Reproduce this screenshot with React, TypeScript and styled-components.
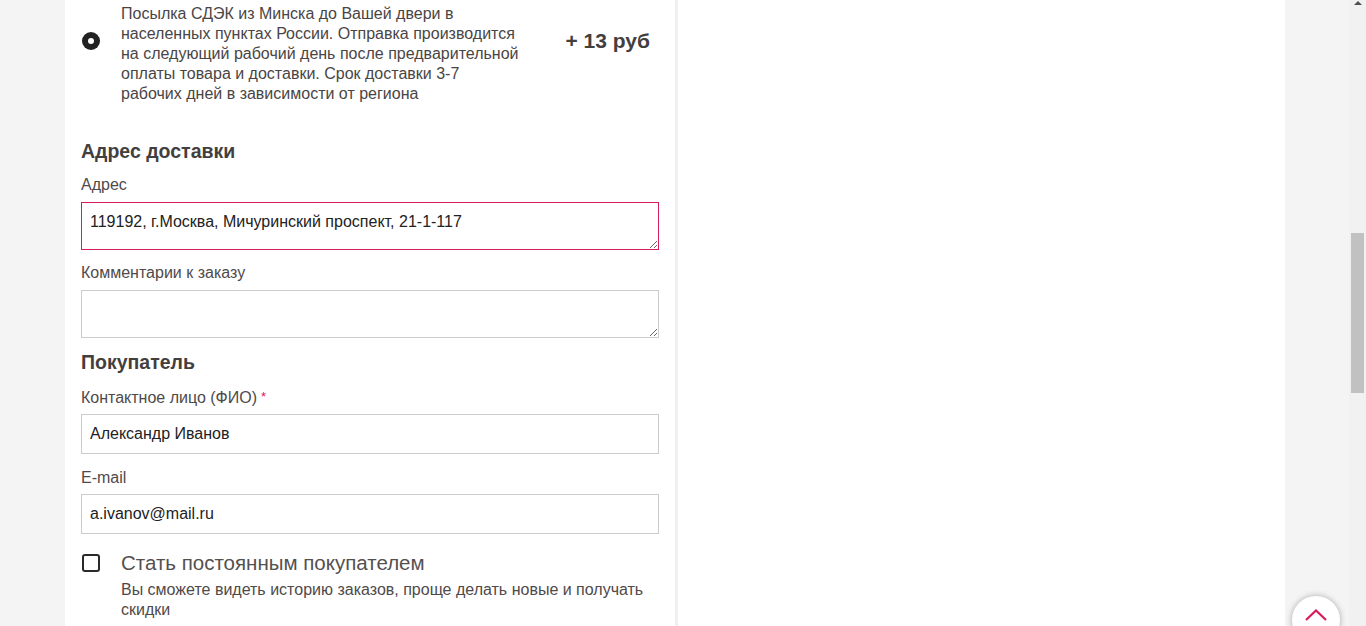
import React from 'react'
import styled, { createGlobalStyle } from 'styled-components'

const GlobalStyle = createGlobalStyle`
    html, body {
        margin: 0;
        padding: 0;
        overflow: hidden;
    }
    body {
        font-family: "Liberation Sans", Arial, sans-serif;
        color: #4a4545;
    }
`

const Page = styled.div`
    display: flex;
    height: 626px;
    width: 1366px;
    overflow: hidden;
`

const Canvas = styled.div`
    flex: 1;
    background-color: #f4f4f4;
    padding: 0 64px 0 65px;
`

const Sheet = styled.div`
    display: flex;
    height: 100%;
    background-color: #fff;
`

const LeftColumn = styled.div`
    width: 578px;
    padding: 4px 16px 0 16px;
    border-right: 3px solid #f0f0f0;
`

const RightColumn = styled.div`
    flex: 1;
`

const OptionRow = styled.div`
    display: flex;
    align-items: flex-start;
`

const Radio = styled.span`
    flex: none;
    width: 18px;
    height: 18px;
    margin: 28px 0 0 1px;
    border-radius: 50%;
    background-color: #222;
    display: flex;
    align-items: center;
    justify-content: center;

    &::after {
        content: '';
        width: 6px;
        height: 6px;
        border-radius: 50%;
        background-color: #fff;
    }
`

const OptionText = styled.p`
    margin: 0 0 0 21px;
    width: 398px;
    font-size: 16px;
    line-height: 20px;
`

const Price = styled.div`
    margin: 25px 9px 0 auto;
    font-size: 21px;
    font-weight: bold;
    color: #443f3f;
`

const Heading = styled.h3<{ $top: number }>`
    margin: ${(p) => p.$top}px 0 0;
    font-size: 19.5px;
    line-height: 22px;
    font-weight: bold;
    color: #443f3f;
`

const Label = styled.div<{ $top: number }>`
    margin-top: ${(p) => p.$top}px;
    font-size: 16px;
    line-height: 18px;
    color: #4f4a4a;
`

const Required = styled.span`
    color: #e0145b;
    margin-left: 4px;
    font-size: 13px;
    vertical-align: 2px;
`

const Area = styled.textarea<{ $focused?: boolean }>`
    display: block;
    box-sizing: border-box;
    width: 100%;
    height: 48px;
    margin-top: 8px;
    padding: 10px 8px;
    font-family: "Liberation Sans", Arial, sans-serif;
    font-size: 16px;
    line-height: 18px;
    color: #222;
    border: 1px solid ${(p) => (p.$focused ? '#d81b5a' : '#cccccc')};
    border-radius: 0;
    outline: none;
    resize: vertical;
`

const Field = styled.input`
    display: block;
    box-sizing: border-box;
    width: 100%;
    height: 40px;
    margin-top: 7px;
    padding: 0 8px;
    font-family: "Liberation Sans", Arial, sans-serif;
    font-size: 16px;
    color: #222;
    border: 1px solid #cccccc;
    border-radius: 0;
    outline: none;
`

const CheckRow = styled.div`
    display: flex;
    align-items: flex-start;
    margin-top: 17px;
`

const Check = styled.span`
    flex: none;
    box-sizing: border-box;
    width: 18px;
    height: 18px;
    margin: 3px 0 0 1px;
    border: 2px solid #2a2a2a;
    border-radius: 3px;
`

const CheckBody = styled.div`
    margin-left: 21px;
    padding-top: 1px;
    width: 540px;
`

const CheckTitle = styled.div`
    font-size: 20.5px;
    line-height: 22px;
    color: #555050;
`

const CheckNote = styled.div`
    margin-top: 6px;
    font-size: 16px;
    line-height: 20px;
    color: #4f4a4a;
`

const Scrollbar = styled.div`
    width: 17px;
    flex: none;
    background-color: #f1f1f1;
    display: flex;
    flex-direction: column;
    align-items: center;
`

const ScrollArrow = styled.span`
    margin-top: 1px;
    width: 0;
    height: 0;
    border-left: 4px solid transparent;
    border-right: 4px solid transparent;
    border-bottom: 4px solid #505050;
`

const ScrollThumb = styled.span`
    margin-top: 228px;
    width: 13px;
    height: 160px;
    background-color: #c1c1c1;
`

const ToTop = styled.button`
    position: fixed;
    left: 1292px;
    top: 596px;
    width: 48px;
    height: 48px;
    border-radius: 50%;
    border: none;
    background-color: #fff;
    box-shadow: 0 0 6px rgba(0, 0, 0, 0.3);
    display: flex;
    justify-content: center;
    padding-top: 13px;
`

export default function App() {
    return (
        <>
            <GlobalStyle />
            <Page>
                <Canvas>
                    <Sheet>
                        <LeftColumn>
                            <OptionRow>
                                <Radio />
                                <OptionText>
                                    Посылка СДЭК из Минска до Вашей двери в населенных пунктах России. Отправка
                                    производится на следующий рабочий день после предварительной оплаты товара и
                                    доставки. Срок доставки 3-7 рабочих дней в зависимости от региона
                                </OptionText>
                                <Price>+ 13 руб</Price>
                            </OptionRow>

                            <Heading $top={36}>Адрес доставки</Heading>
                            <Label $top={14}>Адрес</Label>
                            <Area $focused readOnly defaultValue="119192, г.Москва, Мичуринский проспект, 21-1-117" />
                            <Label $top={14}>Комментарии к заказу</Label>
                            <Area readOnly defaultValue="" />

                            <Heading $top={13}>Покупатель</Heading>
                            <Label $top={15}>
                                Контактное лицо (ФИО)<Required>*</Required>
                            </Label>
                            <Field readOnly defaultValue="Александр Иванов" />
                            <Label $top={15}>E-mail</Label>
                            <Field readOnly defaultValue="a.ivanov@mail.ru" />

                            <CheckRow>
                                <Check />
                                <CheckBody>
                                    <CheckTitle>Стать постоянным покупателем</CheckTitle>
                                    <CheckNote>
                                        Вы сможете видеть историю заказов, проще делать новые и получать скидки
                                    </CheckNote>
                                </CheckBody>
                            </CheckRow>
                        </LeftColumn>
                        <RightColumn />
                    </Sheet>
                </Canvas>
                <Scrollbar>
                    <ScrollArrow />
                    <ScrollThumb />
                </Scrollbar>
            </Page>
            <ToTop aria-label="Наверх">
                <svg width="22" height="12" viewBox="0 0 22 12" fill="none">
                    <path d="M1 11L11 1.5L21 11" stroke="#d81b5a" strokeWidth="2.2" />
                </svg>
            </ToTop>
        </>
    )
}
